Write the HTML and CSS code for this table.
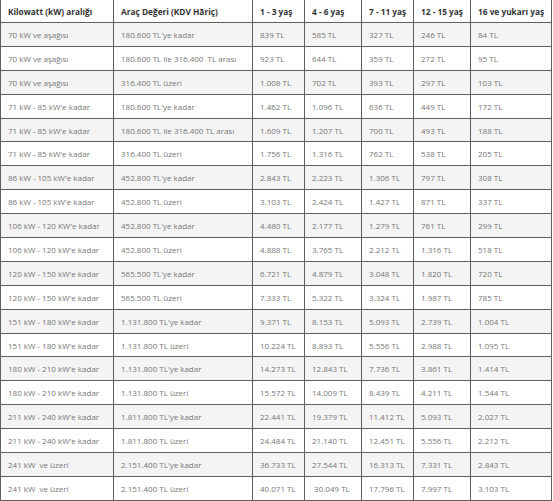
FILE: index.html
```html
<!DOCTYPE html>
<html lang="tr">
<head>
  <meta charset="UTF-8" />
  <meta name="viewport" content="width=device-width, initial-scale=1.0"/>
  <title>MTV Tablosu</title>
  <link rel="stylesheet" href="styles.css">
</head>
<body>

<table class="tax-table">
  <colgroup>
    <col class="c-kw">
    <col class="c-value">
    <col class="c-narrow">
    <col class="c-wide">
    <col class="c-narrow">
    <col class="c-wide">
    <col class="c-last">
  </colgroup>
  <thead>
    <tr>
      <th>Kilowatt (kW) aralığı</th>
      <th>Araç Değeri (KDV Hāriç)</th>
      <th>1 - 3 yaş</th>
      <th>4 - 6 yaş</th>
      <th>7 - 11 yaş</th>
      <th>12 - 15 yaş</th>
      <th>16 ve yukarı yaş</th>
    </tr>
  </thead>
  <tbody>
    <tr><td>70 kW ve aşağısı</td><td>180.600 TL'ye kadar</td><td>839 TL</td><td>585 TL</td><td>327 TL</td><td>246 TL</td><td>84 TL</td></tr>
    <tr><td>70 kW ve aşağısı</td><td>180.600 TL ile 316.400&nbsp; TL arası</td><td>923 TL</td><td>644 TL</td><td>359 TL</td><td>272 TL</td><td>95 TL</td></tr>
    <tr><td>70 kW ve aşağısı</td><td>316.400 TL üzeri</td><td>1.008 TL</td><td>702 TL</td><td>393 TL</td><td>297 TL</td><td>103 TL</td></tr>
    <tr><td>71 kW - 85 kW'e kadar</td><td>180.600 TL'ye kadar</td><td>1.462 TL</td><td>1.096 TL</td><td>636 TL</td><td>449 TL</td><td>172 TL</td></tr>
    <tr><td>71 kW - 85 kW'e kadar</td><td>180.600 TL ile 316.400 TL arası</td><td>1.609 TL</td><td>1.207 TL</td><td>700 TL</td><td>493 TL</td><td>188 TL</td></tr>
    <tr><td>71 kW - 85 kW'e kadar</td><td>316.400 TL üzeri</td><td>1.756 TL</td><td>1.316 TL</td><td>762 TL</td><td>538 TL</td><td>205 TL</td></tr>
    <tr><td>86 kW - 105 kW'e kadar</td><td>452.800 TL'ye kadar</td><td>2.843 TL</td><td>2.223 TL</td><td>1.306 TL</td><td>797 TL</td><td>308 TL</td></tr>
    <tr><td>86 kW - 105 kW'e kadar</td><td>452.800 TL üzeri</td><td>3.103 TL</td><td>2.424 TL</td><td>1.427 TL</td><td>871 TL</td><td>337 TL</td></tr>
    <tr><td>106 kW - 120 KW'e kadar</td><td>452.800 TL'ye kadar</td><td>4.480 TL</td><td>2.177 TL</td><td>1.279 TL</td><td>761 TL</td><td>299 TL</td></tr>
    <tr><td>106 kW - 120 kW'e kadar</td><td>452.800 TL üzeri</td><td>4.888 TL</td><td>3.765 TL</td><td>2.212 TL</td><td>1.316 TL</td><td>518 TL</td></tr>
    <tr><td>120 kW - 150 kW'e kadar</td><td>565.500 TL'ye kadar</td><td>6.721 TL</td><td>4.879 TL</td><td>3.048 TL</td><td>1.820 TL</td><td>720 TL</td></tr>
    <tr><td>120 kW - 150 kW'e kadar</td><td>565.500 TL üzeri</td><td>7.333 TL</td><td>5.322 TL</td><td>3.324 TL</td><td>1.987 TL</td><td>785 TL</td></tr>
    <tr><td>151 kW - 180 kW'e kadar</td><td>1.131.800 TL'ye kadar</td><td>9.371 TL</td><td>8.153 TL</td><td>5.093 TL</td><td>2.739 TL</td><td>1.004 TL</td></tr>
    <tr><td>151 kW - 180 kW'e kadar</td><td>1.131.800 TL üzeri</td><td>10.224 TL</td><td>8.893 TL</td><td>5.556 TL</td><td>2.988 TL</td><td>1.095 TL</td></tr>
    <tr><td>180 kW - 210 kW'e kadar</td><td>1.131.800 TL'ye kadar</td><td>14.273 TL</td><td>12.843 TL</td><td>7.736 TL</td><td>3.861 TL</td><td>1.414 TL</td></tr>
    <tr><td>180 kW - 210 kW'e kadar</td><td>1.131.800 TL üzeri</td><td>15.572 TL</td><td>14.009 TL</td><td>8.439 TL</td><td>4.211 TL</td><td>1.544 TL</td></tr>
    <tr><td>211 kW - 240 kW'e kadar</td><td>1.811.800 TL'ye kadar</td><td>22.441 TL</td><td>19.379 TL</td><td>11.412 TL</td><td>5.093 TL</td><td>2.027 TL</td></tr>
    <tr><td>211 kW - 240 kW'e kadar</td><td>1.811.800 TL üzeri</td><td>24.484 TL</td><td>21.140 TL</td><td>12.451 TL</td><td>5.556 TL</td><td>2.212 TL</td></tr>
    <tr><td>241 kW&nbsp; ve üzeri</td><td>2.151.400 TL'ye kadar</td><td>36.733 TL</td><td>27.544 TL</td><td>16.313 TL</td><td>7.331 TL</td><td>2.843 TL</td></tr>
    <tr><td>241 kW&nbsp; ve üzeri</td><td>2.151.400 TL üzeri</td><td>40.071 TL</td><td>&nbsp;30.049 TL</td><td>17.796 TL</td><td>7.997 TL</td><td>3.103 TL</td></tr>
  </tbody>
</table>

</body>
</html>
```

FILE: styles.css
```css
body {
  margin: 0;
  padding: 0;
  background: #fff;
  font-family: 'Open Sans', sans-serif;
}
.tax-table {
  width: 552px;
  table-layout: fixed;
  border-collapse: collapse;
  font-size: 8px;
  color: #777;
}
.c-kw { width: 113px; }
.c-value { width: 139px; }
.c-narrow { width: 52px; }
.c-wide { width: 57px; }
.c-last { width: 81px; }
.tax-table th,
.tax-table td {
  border: 1px solid #5f5f5f;
  padding: 0 0 0 7px;
  text-align: left;
  white-space: nowrap;
  overflow: hidden;
}
.tax-table thead th {
  border-top: none;
  height: 22px;
  font-size: 8.3px;
  font-weight: bold;
  color: #333;
}
.tax-table tbody td {
  height: 22.9px;
}
.tax-table tbody tr:nth-child(odd) {
  background: #f4f4f4;
}
```
